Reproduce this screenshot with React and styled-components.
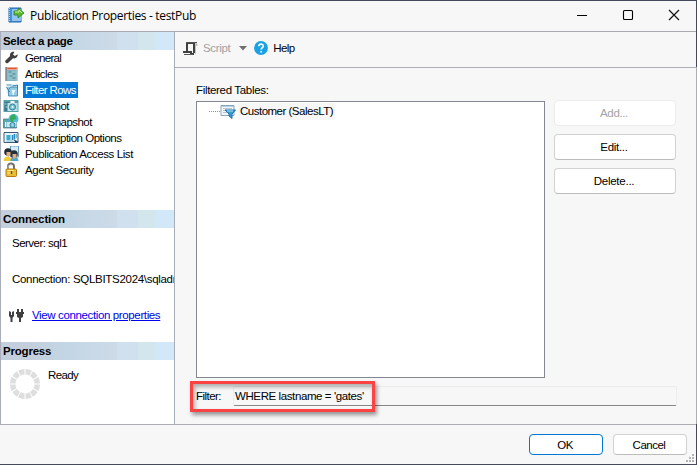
import React from "react";
import styled, { createGlobalStyle } from "styled-components";

const GlobalStyle = createGlobalStyle`
  * { box-sizing: border-box; }
  body { margin: 0; background: #f7f7f7; overflow: hidden; }
  button { font: inherit; padding: 0; }
  svg { display: block; flex: none; }
`;

const Window = styled.div`
  width: 697px;
  height: 465px;
  display: flex;
  flex-direction: column;
  background: #f7f7f7;
  border: 1px solid #44485f;
  border-left: 0;
  font: 11.5px/16px "Liberation Sans", Arial, sans-serif;
  color: #000;
  white-space: nowrap;
`;
const TitleBar = styled.header`
  height: 31px;
  flex: none;
  display: flex;
  align-items: center;
  padding: 0 16px 2px 8px;
  border-bottom: 1px solid #a9abae;
`;
const Title = styled.h1`
  margin: 2px auto 0 6px;
  font: 12px/16px "Open Sans", "Noto Sans", sans-serif;
  letter-spacing: -0.33px;
`;
const Controls = styled.div`
  display: flex;
  gap: 34px;
`;
const Main = styled.div`
  height: 393px;
  flex: none;
  display: flex;
  border-bottom: 1px solid #adadb3;
`;
const Sidebar = styled.aside`
  width: 175px;
  flex: none;
  background: #fff;
  border: solid #a9adb9;
  border-width: 0 1px;
  overflow: hidden;
`;
const SectionTitle = styled.h2`
  margin: 0;
  height: 18px;
  padding-left: 2px;
  font-size: 11.5px;
  line-height: 18px;
  letter-spacing: ${(p) => p.$spacing}px;
  background: linear-gradient(90deg, #c3cfdd 0 18%, #c3d6e5 38%, #c9d9e7 54%, #cddae8 67%, #d0e0ee 67% 79%, #d4e6ed 79% 89%, #d2e8f8 89%);
`;
const PageList = styled.nav`
  height: 160px;
`;
const PageRow = styled.div`
  height: 16px;
  display: flex;
  align-items: center;
  padding-left: 2px;
  gap: 3px;
`;
const PageLabel = styled.span`
  height: 16px;
  padding: 0 2px;
  letter-spacing: ${(p) => p.$spacing}px;
  color: ${(p) => (p.$selected ? "#fff" : "#000")};
  background: ${(p) => (p.$selected ? "#0078d7" : "transparent")};
`;
const Connection = styled.div`
  height: 114px;
  padding: 7px 0 0 11px;
  display: flex;
  flex-direction: column;
  gap: 20px;
`;
const Line = styled.span`
  letter-spacing: ${(p) => p.$spacing}px;
`;
const LinkRow = styled.div`
  display: flex;
  gap: 8px;
  margin-left: -3px;
`;
const Link = styled.a`
  color: #0000f0;
  text-decoration: underline;
  text-underline-offset: 1px;
  letter-spacing: -0.37px;
`;
const Progress = styled.div`
  display: flex;
  gap: 7px;
  padding: 7px 0 0 8px;
`;
const Content = styled.main`
  flex: 1;
  display: flex;
  flex-direction: column;
`;
const Toolbar = styled.div`
  height: 36px;
  flex: none;
  display: flex;
  align-items: center;
  padding: 0 0 3px 8px;
  border-bottom: 1px solid #adadb3;
`;
const ToolLabel = styled.span`
  color: ${(p) => (p.$disabled ? "#a0a0a0" : "#000")};
  letter-spacing: ${(p) => p.$spacing}px;
  margin: 0 ${(p) => p.$gap || 0}px 0 5px;
`;
const Pane = styled.section`
  flex: 1;
  padding: 14px 19px 0 21px;
  border-right: 1px solid #adadb3;
`;
const Caption = styled.div`
  height: 19px;
  letter-spacing: -0.33px;
`;
const Split = styled.div`
  display: flex;
  gap: 9px;
`;
const ListBox = styled.div`
  width: 349px;
  height: 277px;
  background: #fff;
  border: 1px solid #828790;
  padding: 1px 0 0 12px;
`;
const TreeItem = styled.div`
  height: 17px;
  display: flex;
  align-items: center;
`;
const Branch = styled.span`
  width: 11px;
  height: 1px;
  background: repeating-linear-gradient(90deg, #909090 0 1px, transparent 1px 2px);
`;
const TreeLabel = styled.span`
  margin-left: 2px;
  padding: 0 2px;
  height: 17px;
  background: #f7f7f7;
  letter-spacing: -0.5px;
`;
const Stack = styled.div`
  display: flex;
  flex-direction: column;
  gap: 8px;
  margin-top: -1px;
`;
const Button = styled.button`
  width: ${(p) => p.$width || 122}px;
  height: ${(p) => p.$height || 26}px;
  border: 1px solid ${(p) => (p.$primary ? "#0078d4" : p.disabled ? "#ececec" : "#d2d2d2")};
  border-bottom-color: ${(p) => (p.$primary ? "#0078d4" : p.disabled ? "#ececec" : "#bcbcbc")};
  border-radius: 4px;
  background: #fff;
  padding-right: 2px;
  color: ${(p) => (p.disabled ? "#a3a3a3" : "#000")};
  letter-spacing: ${(p) => p.$spacing}px;
`;
const FilterRow = styled.div`
  position: relative;
  display: flex;
  align-items: center;
  height: 20px;
  margin-top: 8px;
`;
const FilterLabel = styled.label`
  width: 37px;
  letter-spacing: -0.55px;
`;
const FilterValue = styled.div`
  width: 444px;
  height: 20px;
  padding: 1px 0 0 1px;
  border: 1px solid #ececec;
  border-bottom-color: #868686;
  border-radius: 2px;
  letter-spacing: -0.4px;
`;
const Highlight = styled.div`
  position: absolute;
  left: -6px;
  top: -5px;
  width: 185px;
  height: 31px;
  border: 3px solid #fb4343;
  box-shadow: 2px 3px 4px rgba(0, 0, 0, 0.4), inset 2px 3px 4px rgba(0, 0, 0, 0.3);
`;
const Footer = styled.footer`
  position: relative;
  flex: 1;
  display: flex;
  justify-content: flex-end;
  gap: 10px;
  padding: 9px 9px 0 0;
`;
const Grip = styled.svg`
  position: absolute;
  right: 2px;
  bottom: 2px;
`;

const PublicationIcon = () => (
  <svg width="16" height="16" viewBox="0 0 16 16">
    <path d="M1 1h12v14H1z" fill="#4591d9" stroke="#2567b1" />
    <path d="M4 2h9v10H4z" fill="#8fc6f4" />
    <path d="M1.5 1v14" stroke="#b9d3ea" strokeDasharray="1 1" />
    <path d="M4 13h9" stroke="#e8f3fa" />
    <path d="M6 4h4V1l6 5-6 5V8H6z" fill="#5abb30" stroke="#2c7921" strokeWidth=".8" />
    <path d="M7 5h4V3l3 3" fill="none" stroke="#c6f395" />
  </svg>
);
const Minimize = () => (
  <svg width="12" height="12"><path d="M1 6.5h10" stroke="#000" /></svg>
);
const Maximize = () => (
  <svg width="12" height="12"><rect x="1.5" y="1.5" width="9" height="9" rx="1" fill="none" stroke="#000" strokeWidth="1.1" /></svg>
);
const Close = () => (
  <svg width="12" height="12"><path d="M1 1l10 10M11 1L1 11" stroke="#111" strokeWidth="1.15" /></svg>
);

const glyphs = {
  wrench: (
    <path d="M14 4.2 11.4 6 9.5 4.4 11 1.8C8 1.2 5.8 3.5 6.6 6.1L2 10.6c-1.3 1.4 1 3.6 2.5 2.4l5-4.7C12 9 14.7 6.7 14 4.2z" fill="#404040" />
  ),
  article: (
    <>
      <path d="M3 1h11v14H3z" fill="#7fb3bf" />
      <path d="M3 1h11v3H3z" fill="#e9a48c" />
      <path d="M4 2.5h9" stroke="#df573a" />
      <path d="M4 5h9v9H4z" fill="#8cc0cb" />
      <path d="M5 6h3M9 8h3M6 10h3M9 12h3" stroke="#4b7f95" />
      <path d="M2.5 1v14" stroke="#464952" />
      <path d="M13.5 4v11" stroke="#a8c7d0" />
    </>
  ),
  filter: (
    <>
      <path d="M3 2h8v9H3z" fill="#d8edf5" />
      <path d="M3 3h5M4 6h3" stroke="#64a0bb" />
      <path d="M7 5h7v9H5V8z" fill="#93cbe4" stroke="#367eac" strokeWidth=".8" />
      <path d="M8 8h4l-1.5 3v2H9v-2z" fill="#eefcff" />
      <path d="M9 4l5-1v4M3 5l3 5" fill="none" stroke="#2484b4" />
    </>
  ),
  snapshot: (
    <>
      <path d="M0 2h15v12H0z" fill="#58a0a9" />
      <path d="M1 4h5v9H1z" fill="#37788d" />
      <path d="M4 5h10v8H4z" fill="#c6e2e9" />
      <circle cx="9" cy="9" r="3" fill="#72cad4" stroke="#387aa0" />
      <circle cx="9" cy="9" r="1" fill="#fff" />
      <path d="M7 3h4v2H7z" fill="#f0faf7" />
      <path d="M1 6h2M2 9h2M13 6v6" stroke="#a9dfe5" />
    </>
  ),
  ftp: (
    <>
      <path d="M0 5h13v9H0z" fill="#5ba6b6" stroke="#426d7f" strokeWidth=".7" />
      <circle cx="10" cy="5" r="5" fill="#55bbd6" />
      <path d="M7 2l4-2 2 5-4 1 2 3-5-2z" fill="#35ad58" />
      <path d="M3 8h10v5H3z" fill="#c9e4ec" />
      <circle cx="9" cy="11" r="2.5" fill="#8ad4e2" stroke="#397b9c" />
      <path d="M2 8v5" stroke="#e8fdff" />
    </>
  ),
  subscription: (
    <>
      <path d="M.5 2.5h14v10H.5z" fill="#ddf5ff" stroke="#455a72" />
      <path d="M3 5h4v5H3z" fill="#37add1" />
      <path d="M9 5v5M11 4v5" stroke="#2885bf" strokeWidth="1.5" />
      <path d="M3 11h7M13 4v4" stroke="#79b6ca" />
      <path d="M10 9l5 3-3 1z" fill="#273a5d" />
    </>
  ),
  access: (
    <>
      <path d="M7 0h8v11H7z" fill="#d5ebfa" stroke="#6a9dbb" />
      <path d="M0 15c0-6 8-6 8 0z" fill="#efcc35" />
      <path d="M7 15c0-6 8-5 8 0z" fill="#4fa3cf" />
      <circle cx="4.5" cy="6" r="3.8" fill="#222b35" />
      <circle cx="10.5" cy="8" r="3.8" fill="#25303b" />
      <path d="M3 6h4v3L5 11 3 9zM9 8h4v3l-2 2-2-2z" fill="#e2ab86" />
    </>
  ),
  lock: (
    <>
      <path d="M4.5 8V4.5a3 3 0 0 1 6 0V8" fill="none" stroke="#75726d" strokeWidth="2" />
      <path d="M4.5 7V4.5a3 3 0 0 1 5 0" fill="none" stroke="#ddd" strokeWidth=".7" />
      <rect x="2.5" y="7" width="10.5" height="7.5" rx="1" fill="#e8bd35" stroke="#b47b13" />
      <path d="M4 8.5h6M4 11h5" stroke="#fff087" />
      <path d="M8 9v3" stroke="#6b4b0d" strokeWidth="1.5" />
    </>
  ),
};
const PageIcon = ({ name }) => (
  <svg width="17" height="16" viewBox="0 0 16 16">{glyphs[name]}</svg>
);
const PlugIcon = () => (
  <svg width="15" height="16" viewBox="0 0 15 16" fill="#404040">
    <path d="M0 4l2 1v3h1V5l2-1v5l-1.5 2v4h-2v-4L0 9zM7 5h8v2h-1v3l-2 1v4h-2v-4l-2-1V7H7zM8 2h2v3H8zM12 2h2v3h-2z" />
  </svg>
);
const spokes = Array.from({ length: 12 }, (_, i) => i * 30);
const Spinner = () => (
  <svg width="32" height="34" viewBox="-16 -17 32 34">
    {spokes.map((a) => (
      <path key={a} d="M-3.3 -14.6Q0 -15.5 3.3 -14.6L2 -9.2Q0 -9.8-2-9.2z" fill="#dedede" transform={`rotate(${a + 15})`} />
    ))}
  </svg>
);
const ScriptIcon = () => (
  <svg width="15" height="15" viewBox="0 0 15 15" fill="none">
    <path d="M4 11V2h7v10" stroke="#414141" strokeWidth="2" />
    <path d="M0 11h8v2h3" stroke="#414141" strokeWidth="2" />
    <path d="M3 1.5h11M1 13.5h9" stroke="#555" />
    <path d="M13 2v2h1.5" stroke="#999" />
    <path d="M12.5 4v9" stroke="#c4c4c4" />
  </svg>
);
const HelpIcon = () => (
  <svg width="14" height="14" viewBox="0 0 15 15">
    <circle cx="7.5" cy="7.5" r="7.4" fill="#18a1e3" />
    <path d="M5.2 5.7c0-3.2 4.8-3 4.8-.3 0 1.8-2.3 1.7-2.3 3.8" fill="none" stroke="#fff" strokeWidth="1.8" />
    <path d="M6.8 10.6h1.8v1.8H6.8z" fill="#fff" />
  </svg>
);
const TableIcon = () => (
  <svg width="16" height="16" viewBox="0 0 16 16">
    <path d="M1 1.5h13v10H1z" fill="#f3f8fb" stroke="#8da5b7" />
    <path d="M1 2h13" stroke="#78a7cb" />
    <path d="M3 4.5h9M3 6.5h4M3 8.5h5" stroke="#b7c4cf" />
    <path d="M5 6h10.5L12 10v4.5L9 12v-2z" fill="#359dd6" stroke="#1b72af" />
    <path d="M7 7h6" stroke="#a7e1fa" />
  </svg>
);

const pages = [
  { name: "General", icon: "wrench", spacing: -0.68 },
  { name: "Articles", icon: "article", spacing: -0.6 },
  { name: "Filter Rows", icon: "filter", spacing: -0.6 },
  { name: "Snapshot", icon: "snapshot", spacing: -0.6 },
  { name: "FTP Snapshot", icon: "ftp", spacing: -0.54 },
  { name: "Subscription Options", icon: "subscription", spacing: -0.48 },
  { name: "Publication Access List", icon: "access", spacing: -0.39 },
  { name: "Agent Security", icon: "lock", spacing: -0.45 },
];

export default function App() {
  return (
    <>
      <GlobalStyle />
      <Window>
        <TitleBar>
          <PublicationIcon />
          <Title>Publication Properties - testPub</Title>
          <Controls><Minimize /><Maximize /><Close /></Controls>
        </TitleBar>
        <Main>
          <Sidebar>
            <SectionTitle $spacing={-0.3}>Select a page</SectionTitle>
            <PageList>
              {pages.map((p) => (
                <PageRow key={p.name}>
                  <PageIcon name={p.icon} />
                  <PageLabel $spacing={p.spacing} $selected={p.name === "Filter Rows"}>{p.name}</PageLabel>
                </PageRow>
              ))}
            </PageList>
            <SectionTitle $spacing={-0.13}>Connection</SectionTitle>
            <Connection>
              <Line $spacing={-0.52}>Server: sql1</Line>
              <Line $spacing={-0.3}>Connection: SQLBITS2024\sqladmin</Line>
              <LinkRow><PlugIcon /><Link>View connection properties</Link></LinkRow>
            </Connection>
            <SectionTitle $spacing={-0.2}>Progress</SectionTitle>
            <Progress><Spinner /><Line $spacing={-0.6}>Ready</Line></Progress>
          </Sidebar>
          <Content>
            <Toolbar>
              <ScriptIcon />
              <ToolLabel $disabled $gap={9} $spacing={-0.35}>Script</ToolLabel>
              <svg width="8" height="5"><path d="M0 0h8L4 4.5z" fill="#707070" /></svg>
              <svg width="7" height="1" />
              <HelpIcon />
              <ToolLabel $spacing={-0.6}>Help</ToolLabel>
            </Toolbar>
            <Pane>
              <Caption>Filtered Tables:</Caption>
              <Split>
                <ListBox>
                  <TreeItem><Branch /><TableIcon /><TreeLabel>Customer (SalesLT)</TreeLabel></TreeItem>
                </ListBox>
                <Stack>
                  <Button disabled $spacing={-0.35}>Add...</Button>
                  <Button $spacing={-0.3}>Edit...</Button>
                  <Button $spacing={-0.25}>Delete...</Button>
                </Stack>
              </Split>
              <FilterRow>
                <FilterLabel>Filter:</FilterLabel>
                <FilterValue>WHERE lastname = 'gates'</FilterValue>
                <Highlight />
              </FilterRow>
            </Pane>
          </Content>
        </Main>
        <Footer>
          <Button $primary $width={74} $height={21} $spacing={-0.6}>OK</Button>
          <Button $width={74} $height={21} $spacing={-0.5}>Cancel</Button>
          <Grip width="8" height="8" fill="#b4b4b4">
            <path d="M6 0h2v2H6zM3 3h2v2H3zM6 3h2v2H6zM0 6h2v2H0zM3 6h2v2H3zM6 6h2v2H6z" />
          </Grip>
        </Footer>
      </Window>
    </>
  );
}
